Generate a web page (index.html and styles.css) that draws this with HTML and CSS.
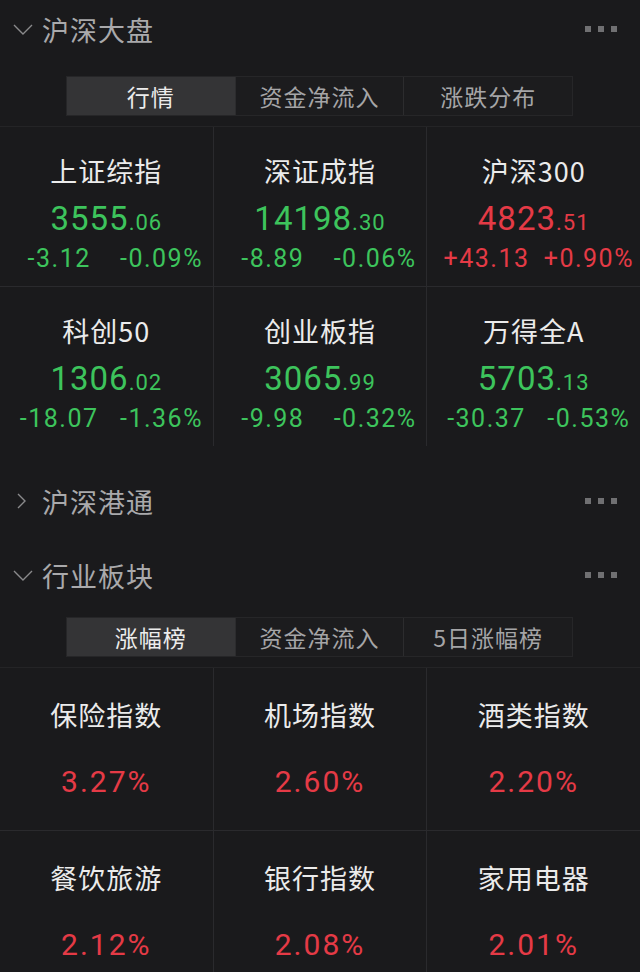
FILE: index.html
```html
<!DOCTYPE html>
<html lang="zh-CN">
<head>
<meta charset="utf-8">
<title>行情</title>
<link rel="stylesheet" href="styles.css">
</head>
<body>
<div class="page">
  <div class="sec-head h1">
    <span class="chev"><svg width="20" height="11" viewBox="0 0 20 11"><polyline points="1,1 10,10 19,1" fill="none" stroke="#8a8a8c" stroke-width="1.4"/></svg></span>
    <span class="sec-title">沪深大盘</span>
    <span class="dots"><i></i><i></i><i></i></span>
  </div>
  <div class="tabs t1">
    <div class="tab active">行情</div>
    <div class="tab">资金净流入</div>
    <div class="tab">涨跌分布</div>
  </div>
  <div class="grid idx">
    <div class="cell"><div class="name">上证综指</div><div class="val up-g"><span class="int">3555</span><span class="dec">.06</span></div><div class="chg green"><span>-3.12</span><span>-0.09%</span></div></div>
    <div class="cell"><div class="name">深证成指</div><div class="val up-g"><span class="int">14198</span><span class="dec">.30</span></div><div class="chg green"><span>-8.89</span><span>-0.06%</span></div></div>
    <div class="cell"><div class="name">沪深300</div><div class="val red"><span class="int">4823</span><span class="dec">.51</span></div><div class="chg red"><span>+43.13</span><span>+0.90%</span></div></div>
    <div class="cell"><div class="name">科创50</div><div class="val up-g"><span class="int">1306</span><span class="dec">.02</span></div><div class="chg green"><span>-18.07</span><span>-1.36%</span></div></div>
    <div class="cell"><div class="name">创业板指</div><div class="val up-g"><span class="int">3065</span><span class="dec">.99</span></div><div class="chg green"><span>-9.98</span><span>-0.32%</span></div></div>
    <div class="cell"><div class="name">万得全A</div><div class="val up-g"><span class="int">5703</span><span class="dec">.13</span></div><div class="chg green"><span>-30.37</span><span>-0.53%</span></div></div>
  </div>
  <div class="sec-head h2">
    <span class="chev"><svg width="20" height="16" viewBox="0 0 20 16"><polyline points="5,1 12,8 5,15" fill="none" stroke="#8a8a8c" stroke-width="1.4"/></svg></span>
    <span class="sec-title">沪深港通</span>
    <span class="dots"><i></i><i></i><i></i></span>
  </div>
  <div class="sec-head h3">
    <span class="chev"><svg width="20" height="11" viewBox="0 0 20 11"><polyline points="1,1 10,10 19,1" fill="none" stroke="#8a8a8c" stroke-width="1.4"/></svg></span>
    <span class="sec-title">行业板块</span>
    <span class="dots"><i></i><i></i><i></i></span>
  </div>
  <div class="tabs t2">
    <div class="tab active">涨幅榜</div>
    <div class="tab">资金净流入</div>
    <div class="tab">5日涨幅榜</div>
  </div>
  <div class="grid sector">
    <div class="cell"><div class="name">保险指数</div><div class="pct red">3.27%</div></div>
    <div class="cell"><div class="name">机场指数</div><div class="pct red">2.60%</div></div>
    <div class="cell"><div class="name">酒类指数</div><div class="pct red">2.20%</div></div>
    <div class="cell"><div class="name">餐饮旅游</div><div class="pct red">2.12%</div></div>
    <div class="cell"><div class="name">银行指数</div><div class="pct red">2.08%</div></div>
    <div class="cell"><div class="name">家用电器</div><div class="pct red">2.01%</div></div>
  </div>
</div>
</body>
</html>
```
FILE: styles.css
```css
* { box-sizing: border-box; }
html, body { margin: 0; padding: 0; background: #1a1a1c; }
body {
  font-family: Roboto, "Noto Sans CJK SC", sans-serif;
  color: #e6e6e6;
  width: 640px;
  height: 972px;
  overflow: hidden;
}
.page { display: flex; flex-direction: column; }

.sec-head {
  display: flex;
  align-items: center;
  padding: 0 23px 0 13px;
}
.sec-head.h1 { height: 64px; padding-bottom: 6px; }
.sec-head.h2 { height: 74px; margin-top: 19px; padding-bottom: 2px; }
.sec-head.h3 { height: 74px; padding-bottom: 2px; }
.chev { width: 29px; display: flex; align-items: center; }
.sec-title {
  font-family: "Noto Sans CJK SC", sans-serif;
  font-size: 27px;
  color: #a9a9ab;
  letter-spacing: 1px;
  flex: 1;
}
.dots { display: flex; gap: 7px; }
.dots i { width: 6px; height: 6px; background: #707072; display: block; }

.tabs {
  display: flex;
  margin-left: 66px;
  width: 507px;
  height: 40px;
  border: 1px solid #262628;
  background: #1c1c1e;
}
.tabs.t1 { margin-top: 12px; }
.tabs.t2 { margin-top: 4px; }
.tab {
  flex: 1;
  display: flex;
  align-items: center;
  justify-content: center;
  font-family: "Noto Sans CJK SC", sans-serif;
  font-size: 23px;
  color: #a5a5a7;
  border-left: 1px solid #2c2c2e;
  letter-spacing: 1px;
}
.tab:first-child { border-left: none; }
.tab.active { background: #343436; color: #ececec; }

.grid {
  display: grid;
  grid-template-columns: repeat(3, 1fr);
  gap: 1px;
  background: #2a2a2d;
  border-top: 1px solid #242426;
}
.grid.idx { margin-top: 10px; grid-auto-rows: 159px; }
.grid.sector { margin-top: 10px; grid-auto-rows: 162px; }
.cell {
  background: #1a1a1c;
  display: flex;
  flex-direction: column;
  align-items: center;
}
.name {
  font-family: "Noto Sans CJK SC", sans-serif;
  font-size: 27px;
  line-height: 30px;
  color: #ebebeb;
  letter-spacing: 1px;
}
.idx .cell { padding-top: 29px; }
.val { margin-top: 13px; line-height: 40px; white-space: nowrap; letter-spacing: 1px; }
.val .int { font-size: 33px; }
.val .dec { font-size: 22px; }
.chg {
  margin-top: -1px;
  width: 100%;
  line-height: 30px;
  font-size: 25px;
  display: grid;
  grid-template-columns: 1fr 1fr;
  padding: 0 0 0 8px;
  text-align: center;
  white-space: nowrap;
  letter-spacing: 1.5px;
}
.sector .cell { padding-top: 30px; }
.sector .name { line-height: 34px; }
.pct { margin-top: 30px; line-height: 40px; font-size: 30px; letter-spacing: 2px; }
.up-g, .green { color: #3dc45c; }
.red { color: #e53a46; }
```
